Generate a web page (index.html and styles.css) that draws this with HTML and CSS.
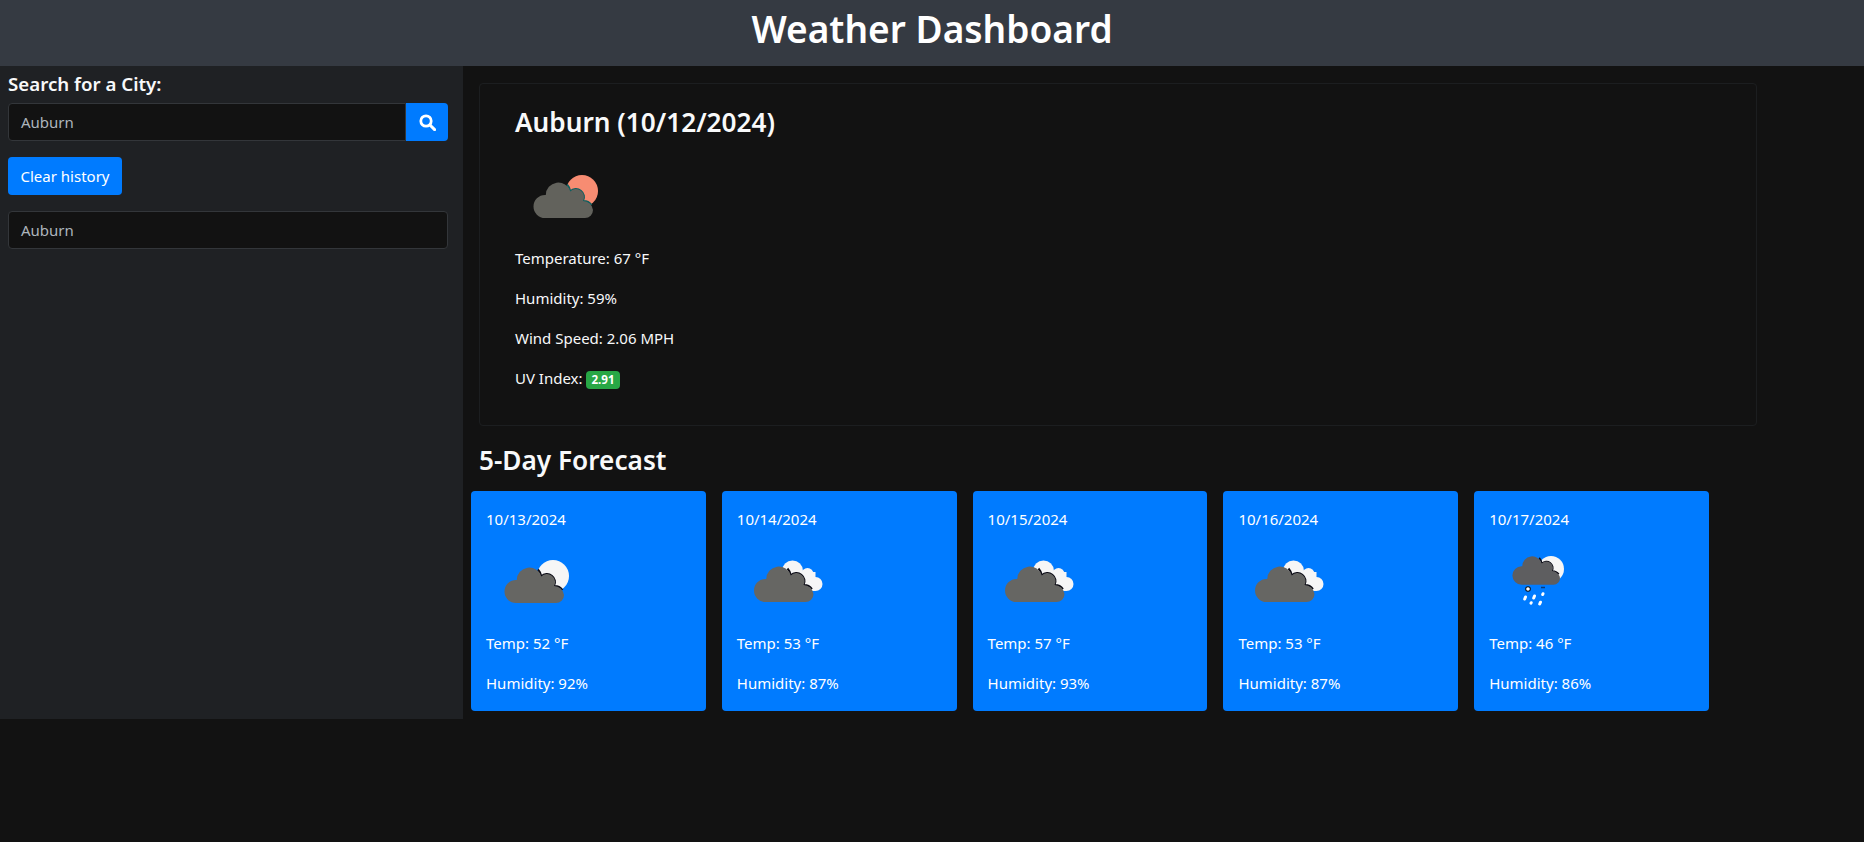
FILE: index.html
```html
<!DOCTYPE html>
<html lang="en">
<head>
  <meta charset="UTF-8">
  <meta name="viewport" content="width=device-width, initial-scale=1.0">
  <title>Weather Dashboard</title>
  <link rel="stylesheet" href="styles.css">
</head>
<body>
<svg class="icon-defs" width="0" height="0">
  <defs>
    <path id="cloudShape" d="M20 48A11.5 11.5 0 0 1 20 25H20.8A12.5 12.5 0 0 1 45.3 21.5A8 8 0 0 1 58 31A10 10 0 0 1 68 40A8 8 0 0 1 60 48Z"/>
    <path id="cloudEdge" d="M42 14.5A12.5 12.5 0 0 1 45.3 21.5A8 8 0 0 1 58 31A10 10 0 0 1 66.5 35" fill="none" stroke-width="2"/>
    <symbol id="few" viewBox="-10 -24 100 100">
      <circle class="sun" cx="57" cy="21" r="16"/>
      <use href="#cloudEdge" class="edge"/>
      <use href="#cloudShape" class="cloud"/>
    </symbol>
    <symbol id="broken" viewBox="-8.5 -23 100 100">
      <g class="back-cloud">
        <circle cx="47" cy="17" r="10.5"/>
        <circle cx="62" cy="20" r="6"/>
        <circle cx="70" cy="30" r="7"/>
        <rect x="44" y="18" width="26" height="19"/>
      </g>
      <use href="#cloudEdge" class="edge"/>
      <use href="#cloudShape" class="cloud"/>
    </symbol>
    <symbol id="rain" viewBox="-10 -24 100 100">
      <circle class="sun" cx="52" cy="14" r="13"/>
      <g transform="translate(6.6 -8.7) scale(.8)">
        <use href="#cloudEdge" class="edge"/>
        <use href="#cloudShape" class="rain-cloud"/>
      </g>
      <circle class="drop-ring" cx="29" cy="34" r="2.8"/>
      <circle class="drop" cx="29" cy="34" r="1.8"/>
      <path class="drop-dark" d="M42 32.5h4"/>
      <path class="drops" d="M26.5 42l-.8 2M35.5 41l-.8 2M44 38.7l-.3 .8M32.2 47.7l-.2 .4M41.5 47.2l-.8 1.8"/>
    </symbol>
  </defs>
</svg>

<header class="top-bar">
  <h1>Weather Dashboard</h1>
</header>

<div class="layout">
  <aside class="sidebar">
    <h5>Search for a City:</h5>
    <div class="search-group">
      <div class="search-input">Auburn</div>
      <button class="search-btn" aria-label="Search">
        <svg width="17" height="17" viewBox="0 0 16 16">
          <circle cx="6.6" cy="6.6" r="4.9" fill="none" stroke="#fff" stroke-width="2.6"/>
          <path d="M10.3 10.3L14.7 14.7" stroke="#fff" stroke-width="2.8" stroke-linecap="round"/>
        </svg>
      </button>
    </div>
    <button class="clear-btn">Clear history</button>
    <div class="history-item">Auburn</div>
  </aside>

  <main class="content">
    <section class="today">
      <h3>Auburn (10/12/2024)</h3>
      <svg class="weather-icon dim" width="100" height="100"><use href="#few"/></svg>
      <p>Temperature: 67 °F</p>
      <p>Humidity: 59%</p>
      <p>Wind Speed: 2.06 MPH</p>
      <p>UV Index: <span class="badge">2.91</span></p>
    </section>

    <h3 class="forecast-title">5-Day Forecast</h3>
    <div class="forecast">
      <div class="day">
        <div class="date">10/13/2024</div>
        <svg class="weather-icon" width="100" height="100"><use href="#few"/></svg>
        <p>Temp: 52 °F</p>
        <p>Humidity: 92%</p>
      </div>
      <div class="day">
        <div class="date">10/14/2024</div>
        <svg class="weather-icon" width="100" height="100"><use href="#broken"/></svg>
        <p>Temp: 53 °F</p>
        <p>Humidity: 87%</p>
      </div>
      <div class="day">
        <div class="date">10/15/2024</div>
        <svg class="weather-icon" width="100" height="100"><use href="#broken"/></svg>
        <p>Temp: 57 °F</p>
        <p>Humidity: 93%</p>
      </div>
      <div class="day">
        <div class="date">10/16/2024</div>
        <svg class="weather-icon" width="100" height="100"><use href="#broken"/></svg>
        <p>Temp: 53 °F</p>
        <p>Humidity: 87%</p>
      </div>
      <div class="day">
        <div class="date">10/17/2024</div>
        <svg class="weather-icon" width="100" height="100"><use href="#rain"/></svg>
        <p>Temp: 46 °F</p>
        <p>Humidity: 86%</p>
      </div>
    </div>
  </main>
</div>
</body>
</html>
```
FILE: styles.css
```css
body {
  margin: 0;
  background: #121212;
  color: #f8f9fa;
  font-family: "Noto Sans", "Open Sans", sans-serif;
  font-size: 15px;
  line-height: 24px;
}
.icon-defs {
  position: absolute;
}
.top-bar {
  height: 66px;
  background: #353a42;
}
.top-bar h1 {
  margin: 0;
  font-size: 37.1px;
  line-height: 57px;
  font-weight: 600;
  text-align: center;
  color: #fff;
}
.layout {
  display: flex;
}
.sidebar {
  width: 463px;
  flex-shrink: 0;
  box-sizing: border-box;
  padding: 6px 15px 0 8px;
  background: #1f2124;
}
.sidebar h5 {
  margin: 0 0 7px;
  font-size: 18.7px;
  line-height: 23px;
  font-weight: 600;
  color: #f8f9fa;
}
.search-group {
  display: flex;
  height: 38px;
  margin-top: 8px;
  margin-bottom: 16px;
}
.search-input, .history-item {
  box-sizing: border-box;
  height: 38px;
  padding: 6px 12px;
  background: #121212;
  border: 1px solid #33363a;
  color: #adb5bd;
  border-radius: 4px;
}
.search-input {
  flex: 1;
  border-radius: 4px 0 0 4px;
}
.search-btn {
  width: 42px;
  padding: 0;
  display: flex;
  align-items: center;
  justify-content: center;
  background: #007bff;
  border: none;
  border-radius: 0 4px 4px 0;
}
.clear-btn {
  display: block;
  width: 114px;
  height: 38px;
  padding: 0;
  margin-bottom: 16px;
  background: #007bff;
  border: none;
  border-radius: 4px;
  color: #fff;
  font: inherit;
}
.content {
  flex: 1;
  padding: 17px 8px 8px;
}
.today {
  width: 1278px;
  box-sizing: border-box;
  margin-left: 8px;
  padding: 21px 35px 19px;
  border: 1px solid #1c1e20;
  border-radius: 4px;
}
.today h3, .forecast-title {
  margin: 0 0 7px;
  font-size: 26.2px;
  line-height: 34px;
  font-weight: 600;
}
.weather-icon {
  display: block;
}
p {
  margin: 0 0 16px;
}
.badge {
  display: inline-block;
  padding: 0 5px;
  background: #28a745;
  border-radius: 4px;
  color: #fff;
  font-size: 11.6px;
  line-height: 18px;
  font-weight: 700;
}
.forecast-title {
  margin: 17px 0 14px 8px;
}
.forecast {
  display: flex;
  gap: 16px;
}
.day {
  width: 234.8px;
  box-sizing: border-box;
  padding: 16px 15px 0;
  background: #007bff;
  border-radius: 4px;
  color: #fff;
}
.sun {
  fill: var(--sun, #f6f6f6);
}
.back-cloud {
  fill: #f6f6f6;
}
.cloud {
  fill: var(--cloud, #666663);
}
.rain-cloud {
  fill: #5e5e60;
}
.edge {
  stroke: var(--edge, #0a0a14);
}
.dim {
  --sun: #f78c72;
  --cloud: #62625c;
  --edge: #0d5f60;
}
.drop {
  fill: #fff;
}
.drop-ring {
  fill: #111;
}
.drop-dark {
  stroke: #0a3a78;
  stroke-width: 1.5;
}
.drops {
  fill: none;
  stroke: #fff;
  stroke-width: 3;
  stroke-linecap: round;
}
```
